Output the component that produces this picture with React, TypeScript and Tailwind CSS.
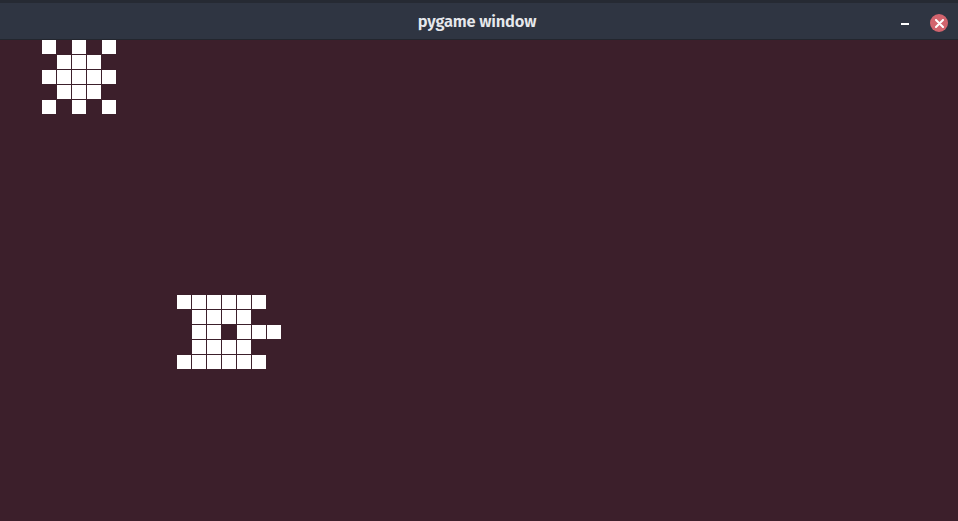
import React from "react";

const A = ["X.X.X", ".XXX.", "XXXXX", ".XXX.", "X.X.X"];
const B = ["XXXXXX.", ".XXXX..", ".XX.XXX", ".XXXX..", "XXXXXX."];

function Pattern({ rows, left, top }: { rows: string[]; left: number; top: number }) {
  return (
    <>
      {rows.flatMap((r, j) =>
        r.split("").map((c, i) =>
          c === "X" ? (
            <div
              key={`${i}-${j}`}
              className="absolute w-[14px] h-[14px] bg-white"
              style={{ left: left + i * 15, top: top + j * 15 }}
            />
          ) : null
        )
      )}
    </>
  );
}

export default function App() {
  return (
    <div className="w-[958px] h-[521px] flex flex-col bg-[#3c1f2b] overflow-hidden" style={{ fontFamily: '"Fira Sans", "Open Sans", "Noto Sans", sans-serif' }}>
      <div className="h-[40px] shrink-0 bg-[#2f3542] border-t-[3px] border-t-[#262a33] border-b border-b-[#23262e] relative flex items-center justify-center">
        <span className="text-[16.5px] font-semibold text-[#e6e8ec] tracking-[-0.2px] mt-[2px] ml-[-4px]">pygame window</span>
        <div className="absolute right-[10px] top-[11px] flex items-start gap-[21px]">
          <div className="w-[8px] h-[2px] bg-white mt-[9px]" />
          <div className="w-[18px] h-[18px] rounded-full bg-[#d2646e] flex items-center justify-center">
            <svg width="9" height="9" viewBox="0 0 9 9">
              <path d="M1 1L8 8M8 1L1 8" stroke="white" strokeWidth="2" strokeLinecap="round" />
            </svg>
          </div>
        </div>
      </div>
      <div className="relative flex-1">
        <Pattern rows={A} left={42} top={0} />
        <Pattern rows={B} left={177} top={255} />
      </div>
    </div>
  );
}
